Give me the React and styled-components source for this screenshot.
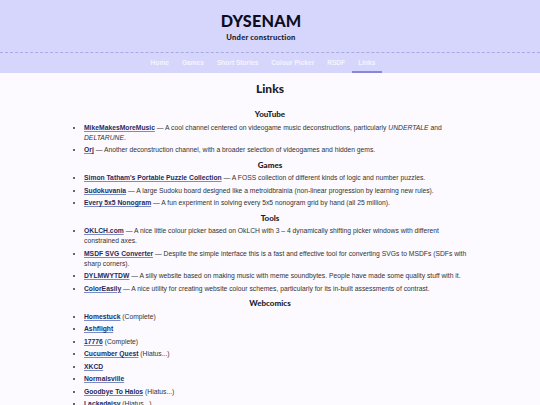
import React from 'react'
import styled, { createGlobalStyle } from 'styled-components'

const Global = createGlobalStyle`
  html, body {
    margin: 0;
    padding: 0;
    background: #fcfaff;
  }
  body {
    font-family: "Liberation Sans", Arial, sans-serif;
    color: #333;
  }
`

const Header = styled.header`
  background: #d6d6fd;
  display: flex;
  flex-direction: column;
  align-items: center;
  padding-right: 18px;
`

const Title = styled.h1`
  font-family: "Lato", sans-serif;
  font-weight: 900;
  font-size: 16.2px;
  letter-spacing: 0.2px;
  color: #0d0d1f;
  margin: 11px 0 0;
  line-height: 20px;
`

const Subtitle = styled.div`
  font-family: "Lato", sans-serif;
  font-weight: 900;
  font-size: 7.6px;
  color: #1a1a2a;
  margin: 1px 0 10px;
  letter-spacing: 0.2px;
`

const Nav = styled.nav`
  align-self: stretch;
  margin-right: -18px;
  padding-right: 14px;
  border-top: 1px dashed #a9a9e3;
  display: flex;
  justify-content: center;
`

const NavLink = styled.a`
  font-size: 6.6px;
  font-weight: 700;
  color: #f4f4ff;
  text-decoration: none;
  padding: 6px 6.5px 5px;
  border-bottom: 2px solid ${p => (p.$active ? '#8d85dd' : 'transparent')};
`

const Main = styled.main`
  width: 400px;
  margin: 0 auto;
  padding-top: 8px;
`

const PageTitle = styled.h2`
  font-family: "Lato", sans-serif;
  font-weight: 900;
  font-size: 12px;
  color: #1a1a2a;
  text-align: center;
  margin: 0 0 11px;
  line-height: 16px;
`

const Section = styled.section`
  margin-bottom: 3.5px;
`

const SectionTitle = styled.h3`
  font-family: "Lato", sans-serif;
  font-weight: 900;
  font-size: 8px;
  color: #1a1a2a;
  text-align: center;
  margin: 0 0 2.5px;
  line-height: 12px;
`

const List = styled.ul`
  margin: 0;
  padding-left: 14px;
  font-size: 6.75px;
  line-height: 10px;
`

const Item = styled.li`
  margin-bottom: 2.5px;
`

const Link = styled.a`
  color: #1d2c5e;
  font-weight: 700;
  text-decoration: underline;
  text-decoration-color: #7c8bc4;
`

const sections = [
  {
    title: 'YouTube',
    items: [
      ['MikeMakesMoreMusic', <> — A cool channel centered on videogame music deconstructions, particularly <i>UNDERTALE</i> and <i>DELTARUNE</i>.</>],
      ['Orj', ' — Another deconstruction channel, with a broader selection of videogames and hidden gems.'],
    ],
  },
  {
    title: 'Games',
    items: [
      ["Simon Tatham's Portable Puzzle Collection", ' — A FOSS collection of different kinds of logic and number puzzles.'],
      ['Sudokuvania', ' — A large Sudoku board designed like a metroidbrainia (non-linear progression by learning new rules).'],
      ['Every 5x5 Nonogram', ' — A fun experiment in solving every 5x5 nonogram grid by hand (all 25 million).'],
    ],
  },
  {
    title: 'Tools',
    items: [
      ['OKLCH.com', ' — A nice little colour picker based on OkLCH with 3 – 4 dynamically shifting picker windows with different constrained axes.'],
      ['MSDF SVG Converter', ' — Despite the simple interface this is a fast and effective tool for converting SVGs to MSDFs (SDFs with sharp corners).'],
      ['DYLMWYTDW', ' — A silly website based on making music with meme soundbytes. People have made some quality stuff with it.'],
      ['ColorEasily', ' — A nice utility for creating website colour schemes, particularly for its in-built assessments of contrast.'],
    ],
  },
  {
    title: 'Webcomics',
    items: [
      ['Homestuck', ' (Complete)'],
      ['Ashflight', ''],
      ['17776', ' (Complete)'],
      ['Cucumber Quest', ' (Hiatus...)'],
      ['XKCD', ''],
      ['Normalsville', ''],
      ['Goodbye To Halos', ' (Hiatus...)'],
      ['Lackadaisy', ' (Hiatus...)'],
    ],
  },
]

const navItems = ['Home', 'Games', 'Short Stories', 'Colour Picker', 'RSDF', 'Links']

export default function App() {
  return (
    <>
      <Global />
      <Header>
        <Title>DYSENAM</Title>
        <Subtitle>Under construction</Subtitle>
        <Nav>
          {navItems.map(n => (
            <NavLink key={n} href="#" $active={n === 'Links'}>{n}</NavLink>
          ))}
        </Nav>
      </Header>
      <Main>
        <PageTitle>Links</PageTitle>
        {sections.map(s => (
          <Section key={s.title}>
            <SectionTitle>{s.title}</SectionTitle>
            <List>
              {s.items.map(([name, desc]) => (
                <Item key={name}>
                  <Link href="#">{name}</Link>{desc}
                </Item>
              ))}
            </List>
          </Section>
        ))}
      </Main>
    </>
  )
}
